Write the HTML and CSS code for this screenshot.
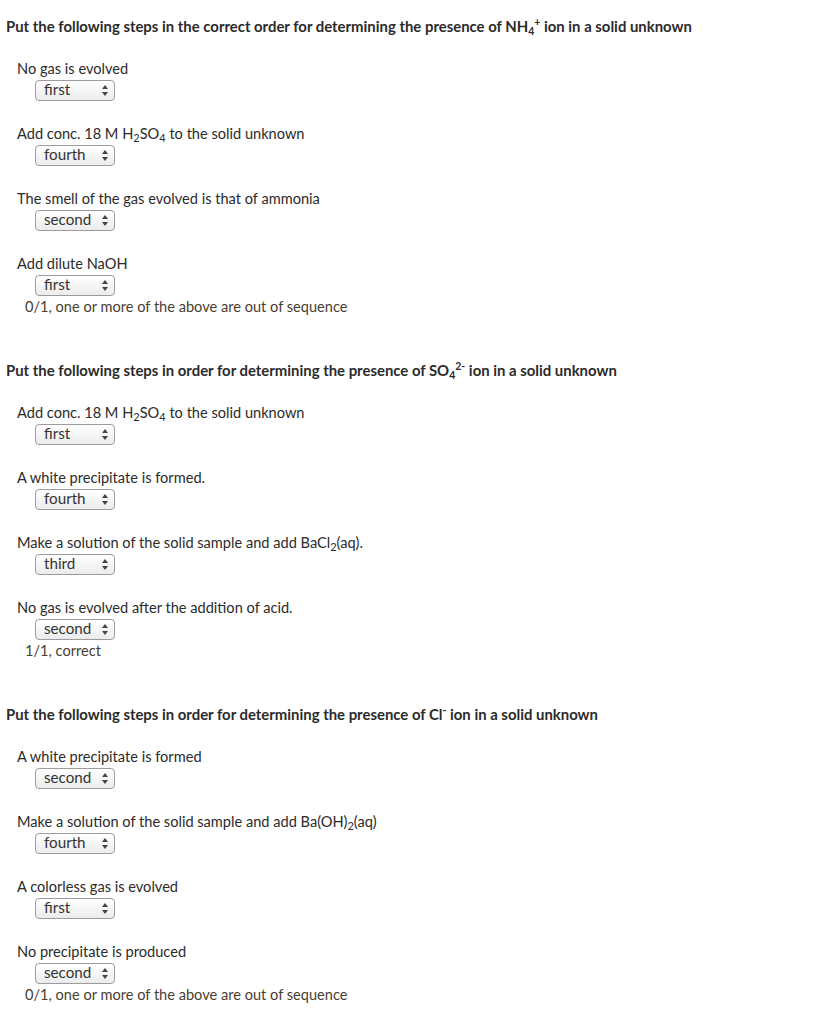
FILE: index.html
```html
<!DOCTYPE html>
<html>
<head>
<meta charset="utf-8">
<link rel="stylesheet" href="styles.css">
</head>
<body>
<div class="page">

<section class="q">
  <h2 class="title">Put the following steps in the correct order for determining the presence of NH<sub>4</sub><sup>+</sup> ion in a solid unknown</h2>
  <div class="item"><div class="label">No gas is evolved</div><div class="sel"><span class="val">first</span><span class="arr"></span></div></div>
  <div class="item"><div class="label">Add conc. 18 M H<sub>2</sub>SO<sub>4</sub> to the solid unknown</div><div class="sel"><span class="val">fourth</span><span class="arr"></span></div></div>
  <div class="item"><div class="label">The smell of the gas evolved is that of ammonia</div><div class="sel"><span class="val">second</span><span class="arr"></span></div></div>
  <div class="item last"><div class="label">Add dilute NaOH</div><div class="sel"><span class="val">first</span><span class="arr"></span></div></div>
  <div class="result">0/1, one or more of the above are out of sequence</div>
</section>

<section class="q">
  <h2 class="title">Put the following steps in order for determining the presence of SO<sub>4</sub><sup>2-</sup> ion in a solid unknown</h2>
  <div class="item"><div class="label">Add conc. 18 M H<sub>2</sub>SO<sub>4</sub> to the solid unknown</div><div class="sel"><span class="val">first</span><span class="arr"></span></div></div>
  <div class="item"><div class="label">A white precipitate is formed.</div><div class="sel"><span class="val">fourth</span><span class="arr"></span></div></div>
  <div class="item"><div class="label">Make a solution of the solid sample and add BaCl<sub>2</sub>(aq).</div><div class="sel"><span class="val">third</span><span class="arr"></span></div></div>
  <div class="item last"><div class="label">No gas is evolved after the addition of acid.</div><div class="sel"><span class="val">second</span><span class="arr"></span></div></div>
  <div class="result">1/1, correct</div>
</section>

<section class="q">
  <h2 class="title">Put the following steps in order for determining the presence of Cl<sup>-</sup> ion in a solid unknown</h2>
  <div class="item"><div class="label">A white precipitate is formed</div><div class="sel"><span class="val">second</span><span class="arr"></span></div></div>
  <div class="item"><div class="label">Make a solution of the solid sample and add Ba(OH)<sub>2</sub>(aq)</div><div class="sel"><span class="val">fourth</span><span class="arr"></span></div></div>
  <div class="item"><div class="label">A colorless gas is evolved</div><div class="sel"><span class="val">first</span><span class="arr"></span></div></div>
  <div class="item last"><div class="label">No precipitate is produced</div><div class="sel"><span class="val">second</span><span class="arr"></span></div></div>
  <div class="result">0/1, one or more of the above are out of sequence</div>
</section>

</div>
</body>
</html>
```

FILE: styles.css
```css
html, body {
  margin: 0;
  padding: 0;
  background: #ffffff;
}
body {
  font-family: Lato, "Open Sans", "Liberation Sans", sans-serif;
  color: #2b2b2b;
  font-size: 14.6px;
}
.page {
  padding: 16px 0 0 6px;
}
.q {
  margin-bottom: 45px;
}
.title {
  margin: 0 0 24px 0;
  font-size: 14.9px;
  font-weight: 700;
  line-height: 20px;
  color: #2b2b2b;
}
sub, sup {
  font-size: 11px;
  line-height: 0;
  position: relative;
  vertical-align: baseline;
}
sub { top: 3px; }
sup { top: -6px; }
.title sub, .title sup { font-size: 10.5px; }
.item {
  padding-left: 11px;
  margin-bottom: 24px;
}
.item.last {
  margin-bottom: 3px;
}
.label {
  line-height: 18px;
  height: 18px;
  margin-bottom: 2px;
  color: #2b2b2b;
}
.sel {
  margin-left: 18px;
  width: 80px;
  height: 21px;
  box-sizing: border-box;
  border: 1px solid #9c9c9c;
  border-radius: 4px;
  background: linear-gradient(#ffffff, #ececec);
  display: flex;
  align-items: center;
  justify-content: space-between;
  padding: 0 6px 0 8px;
}
.val {
  font-size: 15.2px;
  color: #333333;
  line-height: 19px;
  position: relative;
  top: -1px;
}
.arr {
  width: 6px;
  height: 11px;
  position: relative;
}
.arr::before, .arr::after {
  content: "";
  position: absolute;
  left: 0;
  border-left: 3px solid transparent;
  border-right: 3px solid transparent;
}
.arr::before {
  top: 0;
  border-bottom: 4px solid #444444;
}
.arr::after {
  bottom: 0;
  border-top: 4px solid #444444;
}
.result {
  padding-left: 19px;
  line-height: 16px;
  color: #4a3e33;
}
```
